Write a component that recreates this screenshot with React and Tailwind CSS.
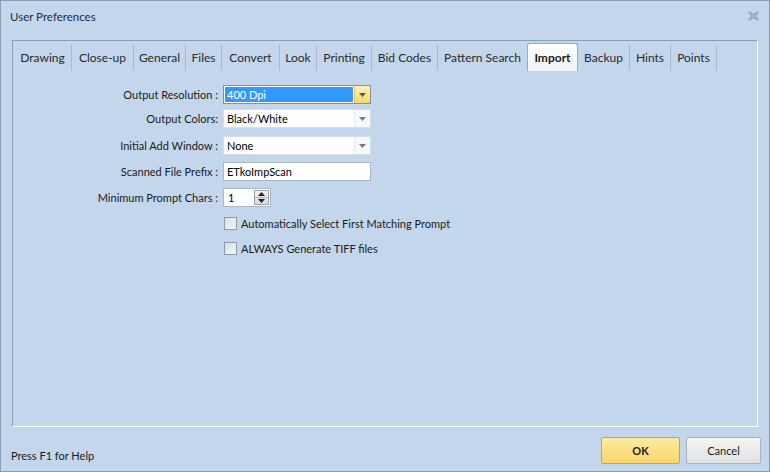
import React from "react";

const tabs = [
  { label: "Drawing", w: 58 },
  { label: "Close-up", w: 62 },
  { label: "General", w: 52 },
  { label: "Files", w: 36 },
  { label: "Convert", w: 58 },
  { label: "Look", w: 37 },
  { label: "Printing", w: 55 },
  { label: "Bid Codes", w: 66 },
  { label: "Pattern Search", w: 90 },
  { label: "Import", w: 50, active: true },
  { label: "Backup", w: 52 },
  { label: "Hints", w: 41 },
  { label: "Points", w: 46 },
];

function Arrow({ color = "#5a5a5a" }) {
  return (
    <svg width="7" height="4" viewBox="0 0 7 4">
      <path d="M0 0 H7 L3.5 4 Z" fill={color} />
    </svg>
  );
}

function Combo({ value, focused }) {
  if (focused) {
    return (
      <div className="flex h-[19px] w-[148px] border border-[#8f8f8f] bg-white">
        <div className="m-px flex flex-1 items-center bg-[#3399ff] pl-[2px] text-white">{value}</div>
        <div className="flex w-[16px] items-center justify-center border-l border-[#e0c27a] bg-gradient-to-b from-[#fdf1bd] to-[#f8d766]">
          <Arrow color="#6b5a2a" />
        </div>
      </div>
    );
  }
  return (
    <div className="flex h-[19px] w-[148px] border border-[#d6dde6] bg-white">
      <div className="flex flex-1 items-center pl-[3px] text-black">{value}</div>
      <div className="flex w-[16px] items-center justify-center border-l border-[#e6eaef] bg-[#f7f8fa]">
        <Arrow color="#7a7a7a" />
      </div>
    </div>
  );
}

function Row({ label, children, className }) {
  return (
    <div className={"flex items-center " + className}>
      <div className="w-[210px] pr-[5px] text-right text-[#1b1b1b]">{label}</div>
      {children}
    </div>
  );
}

function Check({ label, className }) {
  return (
    <div className={"flex items-center pl-[211px] " + className}>
      <div className="h-[13px] w-[13px] border border-[#8f9aa8] bg-gradient-to-br from-[#dcdfe3] to-[#f4f5f6]" />
      <span className="ml-[4px] text-[#1b1b1b]">{label}</span>
    </div>
  );
}

export default function App() {
  return (
    <div
      className="flex h-[472px] w-[770px] flex-col border border-[#8b9bb0] bg-[#c3d6ec] text-[11px] leading-none"
      style={{ fontFamily: 'Lato, "Noto Sans", "Liberation Sans", sans-serif' }}
    >
      {/* title bar */}
      <div className="flex h-[39px] shrink-0 items-start justify-between pl-[9px] pr-[10px] pt-[10px]">
        <span className="text-[11.5px] text-[#1f2d3d]">User Preferences</span>
        <svg width="11" height="10" viewBox="0 0 11 10">
          <path d="M1 1 L10 9 M10 1 L1 9" stroke="#6d7a8a" strokeWidth="2.2" />
          <path d="M1 1 L10 9 M10 1 L1 9" stroke="#f4f6f9" strokeWidth="0.8" />
        </svg>
      </div>

      {/* tab panel */}
      <div className="ml-[11px] mr-[11px] flex h-[387px] shrink-0 flex-col border-b border-l border-r border-t border-b-white border-l-[#8e9db1] border-r-white border-t-[#8e9db1]">
        <div className="flex h-[30px] pl-[1px] pt-[2px] text-[12px]">
          {tabs.map((t) =>
            t.active ? (
              <div
                key={t.label}
                className="-ml-[1px] flex h-[28px] items-center justify-center rounded-t-[3px] border border-b-0 border-[#9caabb] bg-gradient-to-b from-white to-[#eef3f9] font-bold text-[#1b1b1b]"
                style={{ width: t.w + 1 }}
              >
                {t.label}
              </div>
            ) : (
              <div
                key={t.label}
                className="mt-[2px] flex h-[26px] items-center justify-center border-r border-[#a8b7c9] text-[#2a2a2a]"
                style={{ width: t.w }}
              >
                {t.label}
              </div>
            )
          )}
        </div>

        <div className="flex flex-col pt-[14px]">
          <Row label="Output Resolution :">
            <Combo value="400 Dpi" focused />
          </Row>
          <Row label="Output Colors:" className="mt-[5px]">
            <Combo value="Black/White" />
          </Row>
          <Row label="Initial Add Window :" className="mt-[8px]">
            <Combo value="None" />
          </Row>
          <Row label="Scanned File Prefix :" className="mt-[7px]">
            <div className="flex h-[19px] w-[148px] items-center border border-[#abb7c6] bg-white pl-[3px] text-black">
              ETkoImpScan
            </div>
          </Row>
          <Row label="Minimum Prompt Chars :" className="mt-[7px]">
            <div className="flex h-[19px] w-[48px] border border-[#abb7c6] bg-white">
              <div className="flex flex-1 items-center pl-[4px] text-black">1</div>
              <div className="m-px flex w-[15px] flex-col border border-[#9aa4b0] bg-gradient-to-b from-[#f3f3f3] to-[#d9d9d9]">
                <div className="flex flex-1 items-center justify-center border-b border-[#b5bcc5]">
                  <svg width="7" height="4" viewBox="0 0 7 4">
                    <path d="M0 4 H7 L3.5 0 Z" fill="#222" />
                  </svg>
                </div>
                <div className="flex flex-1 items-center justify-center">
                  <Arrow color="#222" />
                </div>
              </div>
            </div>
          </Row>
          <Check label="Automatically Select First Matching Prompt" className="mt-[10px]" />
          <Check label="ALWAYS Generate TIFF files" className="mt-[12px]" />
        </div>
      </div>

      {/* footer */}
      <div className="flex flex-1 items-center justify-between pl-[10px] pr-[8px] pt-[3px]">
        <span className="mt-[10px] text-[#1b1b1b]">Press F1 for Help</span>
        <div className="flex gap-[6px]">
          <button className="h-[27px] w-[79px] rounded-[2px] border border-[#c5a25c] bg-gradient-to-b from-[#fdeaa3] to-[#fbd667] font-bold text-[#1b1b1b]">
            OK
          </button>
          <button className="h-[27px] w-[75px] rounded-[2px] border border-[#a9b2bd] bg-gradient-to-b from-[#f4f4f4] to-[#dfe1e4] text-[#1b1b1b]">
            Cancel
          </button>
        </div>
      </div>
    </div>
  );
}
